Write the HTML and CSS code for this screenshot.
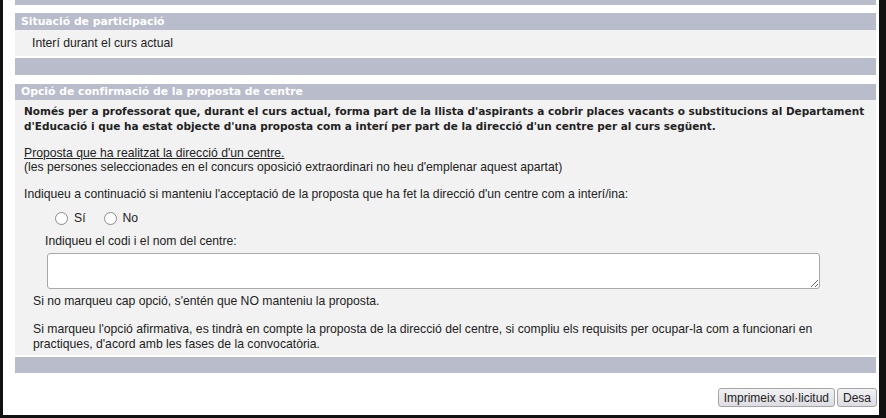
FILE: index.html
```html
<!DOCTYPE html>
<html lang="ca">
<head>
<meta charset="utf-8">
<title>Sol·licitud</title>
<link rel="stylesheet" href="styles.css">
</head>
<body>
<div class="frame">
  <div class="bar bar-top"></div>

  <div class="section-title first">Situació de participació</div>
  <div class="row">Interí durant el curs actual</div>
  <div class="bar bar-mid"></div>

  <div class="section-title second">Opció de confirmació de la proposta de centre</div>
  <div class="content">
    <p class="lead">Només per a professorat que, durant el curs actual, forma part de la llista d'aspirants a cobrir places vacants o substitucions al Departament d'Educació i que ha estat objecte d'una proposta com a interí per part de la direcció d'un centre per al curs següent.</p>
    <p class="note"><span class="u">Proposta que ha realitzat la direcció d'un centre.</span><br>(les persones seleccionades en el concurs oposició extraordinari no heu d'emplenar aquest apartat)</p>
    <p class="ask">Indiqueu a continuació si manteniu l'acceptació de la proposta que ha fet la direcció d'un centre com a interí/ina:</p>
    <div class="radios">
      <label class="opt"><input type="radio" name="mant" class="radio"> Sí</label>
      <label class="opt"><input type="radio" name="mant" class="radio"> No</label>
    </div>
    <div class="field-label">Indiqueu el codi i el nom del centre:</div>
    <textarea class="area"></textarea>
    <p class="info">Si no marqueu cap opció, s'entén que NO manteniu la proposta.</p>
    <p class="info last">Si marqueu l'opció afirmativa, es tindrà en compte la proposta de la direcció del centre, si compliu els requisits per ocupar-la com a funcionari en practiques, d'acord amb les fases de la convocatòria.</p>
  </div>
  <div class="bar bar-bottom"></div>

  <div class="actions">
    <button class="btn">Imprimeix sol·licitud</button><button class="btn">Desa</button>
  </div>
</div>
</body>
</html>
```
FILE: styles.css
```css
html, body {
  margin: 0;
  padding: 0;
  background: #ffffff;
}
body {
  font-family: "Liberation Sans", Arial, sans-serif;
  font-size: 12.2px;
  color: #222222;
}
.frame {
  box-sizing: border-box;
  width: 886px;
  height: 418px;
  border-left: 3px solid #111;
  border-right: 7px solid #111;
  border-bottom: 3px solid #111;
  padding: 0 3px 0 12px;
  display: flex;
  flex-direction: column;
}
.bar {
  background: #b9bccb;
}
.bar-top {
  height: 5px;
}
.section-title {
  background: #b9bccb;
  color: #ffffff;
  font-family: "DejaVu Sans", Verdana, sans-serif;
  font-weight: bold;
  font-size: 10.8px;
  height: 17px;
  line-height: 17px;
  padding-left: 6px;
}
.section-title.first {
  margin-top: 8px;
}
.section-title.second {
  margin-top: 9px;
  height: 16px;
  line-height: 16px;
}
.row {
  background: #f2f2f2;
  height: 26px;
  line-height: 26px;
  padding-left: 17px;
}
.bar-mid {
  height: 17px;
  margin-top: 2px;
}
.content {
  background: #f2f2f2;
  height: 255px;
  box-sizing: border-box;
  padding: 4px 8px 0 9px;
  display: flex;
  flex-direction: column;
}
.content p {
  margin: 0;
  line-height: 15px;
}
.lead {
  font-family: "DejaVu Sans", Verdana, sans-serif;
  font-weight: bold;
  font-size: 10.5px;
}
.note {
  margin-top: 12px !important;
  line-height: 14px !important;
}
.u {
  text-decoration: underline;
}
.ask {
  margin-top: 13px !important;
}
.radios {
  display: flex;
  gap: 18px;
  padding-left: 31px;
  margin-top: 8px;
  height: 16px;
  align-items: center;
}
.opt {
  display: flex;
  align-items: center;
  gap: 6px;
}
.radio {
  appearance: none;
  -webkit-appearance: none;
  margin: 0;
  width: 13px;
  height: 13px;
  border: 1px solid #8a8a8a;
  border-radius: 50%;
  background: #ffffff;
}
.field-label {
  margin-top: 8px;
  padding-left: 21px;
  line-height: 15px;
}
.area {
  display: block;
  box-sizing: border-box;
  margin: 4px 0 0 23px;
  width: 773px;
  height: 36px;
  border: 1px solid #a8a8a8;
  border-radius: 3px;
  background: #ffffff;
  resize: both;
  font-family: inherit;
}
.info {
  margin-top: 5px !important;
  padding-left: 9px;
}
.info.last {
  margin-top: 13px !important;
}
.bar-bottom {
  height: 16px;
  margin-top: 2px;
}
.actions {
  display: flex;
  justify-content: flex-end;
  gap: 2px;
  margin-top: 15px;
  margin-right: -1px;
}
.btn {
  font-family: "Liberation Sans", Arial, sans-serif;
  font-size: 12px;
  color: #222;
  height: 19px;
  padding: 0 5px;
  border: 1px solid #a5a5a5;
  border-radius: 3px;
  background: linear-gradient(#f2f2f4, #dcdce2);
}
```
